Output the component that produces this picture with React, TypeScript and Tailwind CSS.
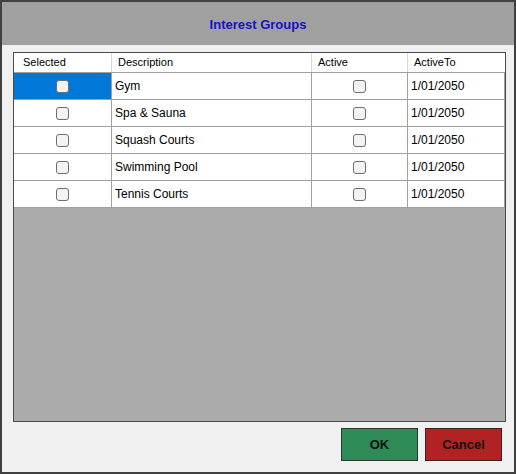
import { useState } from 'react'

type Group = {
  description: string
  activeTo: string
}

const groups: Group[] = [
  { description: 'Gym', activeTo: '1/01/2050' },
  { description: 'Spa & Sauna', activeTo: '1/01/2050' },
  { description: 'Squash Courts', activeTo: '1/01/2050' },
  { description: 'Swimming Pool', activeTo: '1/01/2050' },
  { description: 'Tennis Courts', activeTo: '1/01/2050' },
]

function Check({ checked, onChange }: { checked: boolean; onChange: () => void }) {
  return (
    <button
      type="button"
      onClick={onChange}
      className="w-[13px] h-[13px] rounded-[3px] border border-[#6e6e6e] bg-[#f3f3f3] flex items-center justify-center"
    >
      {checked && (
        <svg viewBox="0 0 10 10" className="w-[9px] h-[9px]">
          <path d="M1.5 5.2 L4 7.6 L8.6 2.2" fill="none" stroke="#222" strokeWidth="1.6" />
        </svg>
      )}
    </button>
  )
}

export default function App() {
  const [selected, setSelected] = useState<boolean[]>(groups.map(() => false))
  const [active, setActive] = useState<boolean[]>(groups.map(() => false))

  const toggle = (list: boolean[], set: (v: boolean[]) => void, i: number) =>
    set(list.map((v, j) => (j === i ? !v : v)))

  return (
    <div
      className="w-[516px] h-[474px] border-2 border-[#404040] bg-[#f0f0f0] flex flex-col text-black"
      style={{ fontFamily: '"Liberation Sans", Arial, sans-serif' }}
    >
      {/* Title bar */}
      <div className="h-[43px] bg-[#a0a0a0] flex items-center justify-center">
        <h1 className="text-[13px] font-bold text-[#1414c0] pt-[2px]">Interest Groups</h1>
      </div>

      {/* Grid */}
      <div className="ml-[11px] mt-[7px] w-[493px] h-[370px] border border-[#4a4a4a] bg-[#ababab] flex flex-col">
        <div className="h-[20px] bg-white flex text-[11px] border-b border-[#a0a0a0]">
          <div className="w-[98px] pl-[9px] flex items-center border-r border-[#d8d8d8]">Selected</div>
          <div className="w-[200px] pl-[6px] flex items-center border-r border-[#d8d8d8]">Description</div>
          <div className="w-[96px] pl-[6px] flex items-center border-r border-[#d8d8d8]">Active</div>
          <div className="flex-1 pl-[6px] flex items-center">ActiveTo</div>
        </div>

        {groups.map((g, i) => (
          <div key={g.description} className="h-[27px] bg-white flex text-[12px] border-b border-[#a0a0a0]">
            <div
              className={`w-[98px] flex items-center justify-center border-r border-[#a0a0a0] ${
                i === 0 ? 'bg-[#0078d7]' : ''
              }`}
            >
              <Check checked={selected[i]} onChange={() => toggle(selected, setSelected, i)} />
            </div>
            <div className="w-[200px] pl-[3px] flex items-center border-r border-[#a0a0a0]">{g.description}</div>
            <div className="w-[96px] flex items-center justify-center border-r border-[#a0a0a0]">
              <Check checked={active[i]} onChange={() => toggle(active, setActive, i)} />
            </div>
            <div className="flex-1 pl-[3px] flex items-center border-r border-[#a0a0a0]">{g.activeTo}</div>
          </div>
        ))}
      </div>

      {/* Buttons */}
      <div className="mt-[6px] flex justify-end gap-[7px] pr-[12px]">
        <button className="w-[77px] h-[33px] bg-[#2e8b57] border border-[#2a3a30] text-[13px] font-bold text-[#111]">
          OK
        </button>
        <button className="w-[77px] h-[33px] bg-[#b22222] border border-[#3a2222] text-[13px] font-bold text-[#111]">
          Cancel
        </button>
      </div>
    </div>
  )
}
